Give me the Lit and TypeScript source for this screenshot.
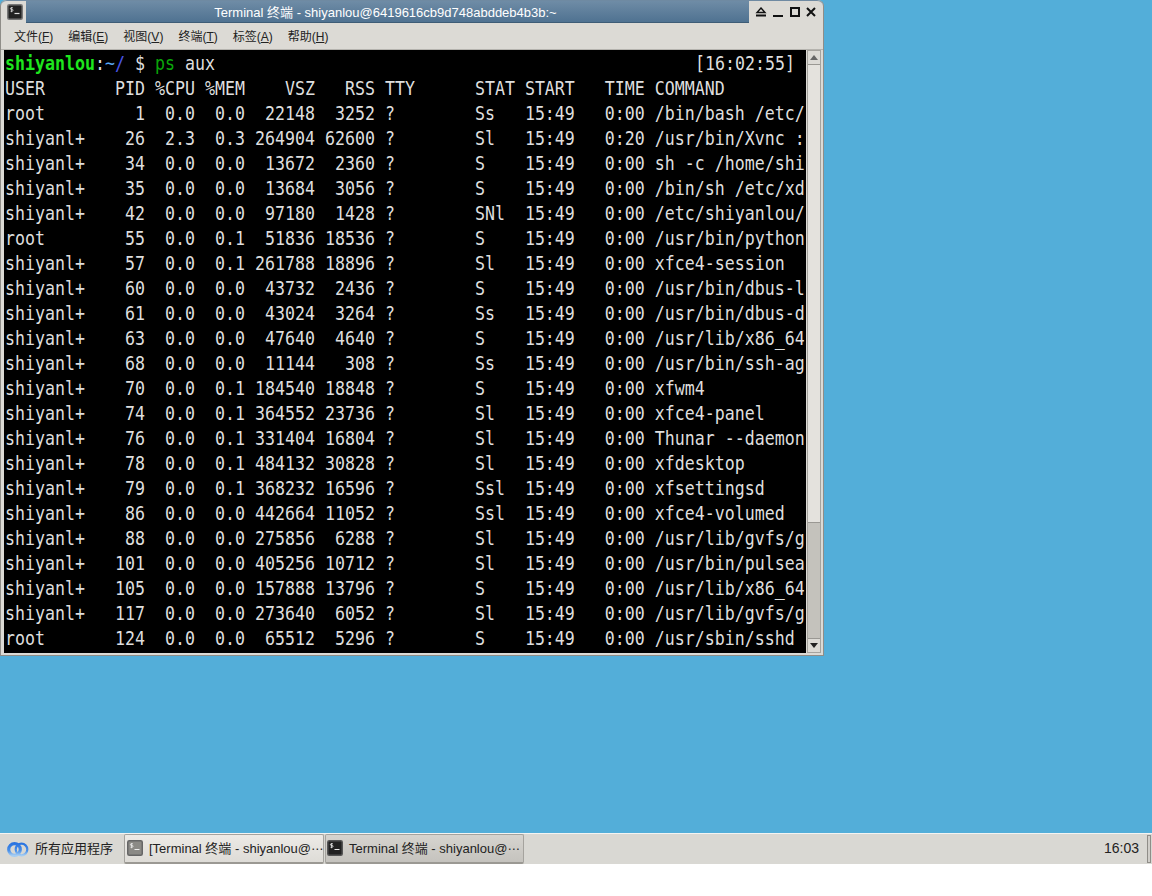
import { LitElement, html, css, svg } from "lit";
import { customElement } from "lit/decorators.js";

const rows = [
  "USER       PID %CPU %MEM    VSZ   RSS TTY      STAT START   TIME COMMAND",
  "root         1  0.0  0.0  22148  3252 ?        Ss   15:49   0:00 /bin/bash /etc/",
  "shiyanl+    26  2.3  0.3 264904 62600 ?        Sl   15:49   0:20 /usr/bin/Xvnc :",
  "shiyanl+    34  0.0  0.0  13672  2360 ?        S    15:49   0:00 sh -c /home/shi",
  "shiyanl+    35  0.0  0.0  13684  3056 ?        S    15:49   0:00 /bin/sh /etc/xd",
  "shiyanl+    42  0.0  0.0  97180  1428 ?        SNl  15:49   0:00 /etc/shiyanlou/",
  "root        55  0.0  0.1  51836 18536 ?        S    15:49   0:00 /usr/bin/python",
  "shiyanl+    57  0.0  0.1 261788 18896 ?        Sl   15:49   0:00 xfce4-session",
  "shiyanl+    60  0.0  0.0  43732  2436 ?        S    15:49   0:00 /usr/bin/dbus-l",
  "shiyanl+    61  0.0  0.0  43024  3264 ?        Ss   15:49   0:00 /usr/bin/dbus-d",
  "shiyanl+    63  0.0  0.0  47640  4640 ?        S    15:49   0:00 /usr/lib/x86_64",
  "shiyanl+    68  0.0  0.0  11144   308 ?        Ss   15:49   0:00 /usr/bin/ssh-ag",
  "shiyanl+    70  0.0  0.1 184540 18848 ?        S    15:49   0:00 xfwm4",
  "shiyanl+    74  0.0  0.1 364552 23736 ?        Sl   15:49   0:00 xfce4-panel",
  "shiyanl+    76  0.0  0.1 331404 16804 ?        Sl   15:49   0:00 Thunar --daemon",
  "shiyanl+    78  0.0  0.1 484132 30828 ?        Sl   15:49   0:00 xfdesktop",
  "shiyanl+    79  0.0  0.1 368232 16596 ?        Ssl  15:49   0:00 xfsettingsd",
  "shiyanl+    86  0.0  0.0 442664 11052 ?        Ssl  15:49   0:00 xfce4-volumed",
  "shiyanl+    88  0.0  0.0 275856  6288 ?        Sl   15:49   0:00 /usr/lib/gvfs/g",
  "shiyanl+   101  0.0  0.0 405256 10712 ?        Sl   15:49   0:00 /usr/bin/pulsea",
  "shiyanl+   105  0.0  0.0 157888 13796 ?        S    15:49   0:00 /usr/lib/x86_64",
  "shiyanl+   117  0.0  0.0 273640  6052 ?        Sl   15:49   0:00 /usr/lib/gvfs/g",
  "root       124  0.0  0.0  65512  5296 ?        S    15:49   0:00 /usr/sbin/sshd",
];

const menus = [
  ["文件(", "F", ")"],
  ["编辑(", "E", ")"],
  ["视图(", "V", ")"],
  ["终端(", "T", ")"],
  ["标签(", "A", ")"],
  ["帮助(", "H", ")"],
];

const termIcon = (bg: string, stroke: string, fg: string, size: number) => html`
  <svg width=${size} height=${size} viewBox="0 0 16 16" class="ticon">
    <rect x="0.75" y="0.75" width="14.5" height="14.5" rx="1.5" fill=${bg} stroke=${stroke} stroke-width="1.5"></rect>
    <path d="M4.6 3.2v5M3.5 7.2h1.7q.8 0 .8-.9t-.8-.9h-1q-.8 0-.8-.8t.8-.9h1.7" fill="none" stroke=${fg} stroke-width="0.8"></path>
    <path d="M7.5 9.5h5" stroke=${fg} stroke-width="1.2"></path>
  </svg>`;

@customElement("app-root")
export class AppRoot extends LitElement {
  static styles = css`
    :host { display: block; width: 1152px; height: 896px; background: #fff; font-family: "Liberation Sans", "Noto Sans CJK SC", sans-serif; overflow: hidden; }
    .desktop { position: relative; height: 833px; background: #53aed9; }
    .window { position: absolute; left: 0; top: 0; width: 824px; height: 656px; box-sizing: border-box; background: #dcdad5; border: 1px solid #8f8d88; border-top: none; border-radius: 6px 6px 0 0; display: flex; flex-direction: column; }
    .titlebar { height: 23px; flex: none; display: flex; align-items: stretch; background: #dcdad5; border-top: 1px solid #6f8aa2; border-radius: 6px 6px 0 0; box-sizing: border-box; }
    .appicon { width: 25px; flex: none; display: flex; align-items: center; justify-content: center; padding-left: 2px; box-sizing: border-box; }
    .title { flex: 1; display: flex; align-items: center; justify-content: center; background: linear-gradient(#6f8ca6, #4f7291); color: #fff; font-size: 13px; border-bottom: 1px solid #3e5c76; padding: 0 4px 1px 0; }
    .buttons { width: 74px; flex: none; display: flex; align-items: center; justify-content: space-between; padding: 0 7px 0 6px; box-sizing: border-box; }
    .menubar { height: 26px; flex: none; display: flex; align-items: center; gap: 15px; padding: 0 0 2px 13px; box-sizing: border-box; font-size: 12px; color: #222; }
    .menubar u { text-underline-offset: 1px; }
    .content { flex: 1; display: flex; gap: 1px; padding: 0 3px 2px 3px; min-height: 0; border-top: 1px solid #b5b3ae; }
    .terminal { width: 802px; flex: none; background: #000; box-sizing: border-box; overflow: hidden; padding: 1px 0 0 1px; }
    .text { width: 915.3px; transform: scaleX(0.874); transform-origin: left top; color: #dedede; font-family: "DejaVu Sans Mono", monospace; font-size: 19px; line-height: 25px; }
    .row { height: 25px; overflow: hidden; white-space: pre; }
    .prompt { display: flex; justify-content: space-between; width: 904px; }
    .user { color: #1ee61e; font-weight: bold; }
    .tilde { color: #5aa8f4; }
    .slash { color: #4a55e6; }
    .cmd { color: #0aa50a; }
    .scroll { width: 14px; flex: none; background: #c4c2bc; border: 1px solid #a5a39e; box-sizing: border-box; display: flex; flex-direction: column; }
    .sbtn { height: 14px; flex: none; background: #dcdad5; border-bottom: 1px solid #9a9893; display: flex; align-items: center; justify-content: center; box-sizing: border-box; }
    .sbtn.down { border-bottom: none; border-top: 1px solid #9a9893; margin-top: auto; }
    .thumb { height: 458px; flex: none; background: #e4e2dd; border-bottom: 1px solid #9a9893; box-sizing: border-box; }
    .panel { height: 31px; background: #d9d8d3; display: flex; align-items: stretch; border-top: 1px solid #f4f4f2; box-sizing: border-box; font-size: 13px; color: #222; }
    .start { width: 124px; flex: none; display: flex; align-items: center; gap: 6px; padding: 0 0 3px 7px; box-sizing: border-box; }
    .task { width: 200px; flex: none; display: flex; align-items: center; gap: 6px; padding: 0 0 2px 2px; box-sizing: border-box; border: 1px solid #a5a39e; border-bottom: 2px solid #9b9993; border-radius: 2px; white-space: nowrap; overflow: hidden; }
    .task.normal { background: linear-gradient(#eceae6, #dedcd7); color: #222; }
    .task.active { background: linear-gradient(#d6d4cf, #c5c3be); color: #222; width: 199px; margin-left: 1px; padding-left: 1px; }
    .spacer { flex: 1; }
    .clock { display: flex; align-items: center; padding: 0 8px 3px 0; font-size: 14px; }
    .grip { width: 4px; margin: 1px 1px 1px 0; border: 1px solid #8f8d88; background: #d0cec9; flex: none; box-sizing: border-box; }
    .ticon { display: block; flex: none; }
    .logo { display: block; flex: none; margin-top: 3px; }
    .dots { font-family: "DejaVu Sans", sans-serif; font-size: 12px; }
  `;

  render() {
    const black = "#111";
    return html`
      <div class="desktop">
        <div class="window">
          <div class="titlebar">
            <div class="appicon">${termIcon("#222", "#777", "#ddd", 16)}</div>
            <div class="title">Terminal 终端 - shiyanlou@6419616cb9d748abddeb4b3b:~</div>
            <div class="buttons">
              <svg width="12" height="10" viewBox="0 0 12 10"><path d="M6 1 10 5.5H2Z" fill="none" stroke=${black} stroke-width="1.4"></path><path d="M1 8.5h10" stroke=${black} stroke-width="2"></path></svg>
              <svg width="10" height="10" viewBox="0 0 10 10"><path d="M0 9h10" stroke=${black} stroke-width="2"></path></svg>
              <svg width="10" height="10" viewBox="0 0 10 10"><rect x="1" y="1" width="8" height="8" fill="none" stroke=${black} stroke-width="2"></rect></svg>
              <svg width="10" height="10" viewBox="0 0 10 10"><path d="M1 1l8 8M9 1l-8 8" stroke=${black} stroke-width="2"></path></svg>
            </div>
          </div>
          <div class="menubar">
            ${menus.map((m) => html`<span>${m[0]}<u>${m[1]}</u>${m[2]}</span>`)}
          </div>
          <div class="content">
            <div class="terminal">
              <div class="text">
                <div class="row prompt"><span><span class="user">shiyanlou</span>:<span class="tilde">~</span><span class="slash">/</span> $ <span class="cmd">ps</span> aux</span><span>[16:02:55]</span></div>
                ${rows.map((r) => html`<div class="row">${r}</div>`)}
              </div>
            </div>
            <div class="scroll">
              <div class="sbtn"><svg width="8" height="5" viewBox="0 0 8 5"><path d="M4 0 8 5H0Z" fill="#666"></path></svg></div>
              <div class="thumb"></div>
              <div class="sbtn down"><svg width="8" height="5" viewBox="0 0 8 5"><path d="M0 0H8L4 5Z" fill="#222"></path></svg></div>
            </div>
          </div>
        </div>
      </div>
      <div class="panel">
        <div class="start">
          <svg class="logo" width="22" height="17" viewBox="0 0 22 17">
            ${svg`<defs><linearGradient id="lg" x1="0" y1="0" x2="0" y2="1"><stop offset="0" stop-color="#2a74e0"></stop><stop offset="0.6" stop-color="#4a90e8"></stop><stop offset="1" stop-color="#a4ccf2"></stop></linearGradient></defs>
            <circle cx="14.5" cy="8.5" r="5.8" fill="none" stroke="url(#lg)" stroke-width="2.2"></circle>
            <circle cx="7.5" cy="8.5" r="5.8" fill="none" stroke="url(#lg)" stroke-width="3.2"></circle>`}
          </svg>
          <span>所有应用程序</span>
        </div>
        <div class="task normal">
          ${termIcon("#8b8a86", "#666", "#eee", 16)}
          <span>[Terminal 终端 - shiyanlou@<span class="dots">⋯</span></span>
        </div>
        <div class="task active">
          ${termIcon("#222", "#555", "#eee", 16)}
          <span>Terminal 终端 - shiyanlou@<span class="dots">⋯</span></span>
        </div>
        <div class="spacer"></div>
        <div class="clock">16:03</div>
        <div class="grip"></div>
      </div>
    `;
  }
}
